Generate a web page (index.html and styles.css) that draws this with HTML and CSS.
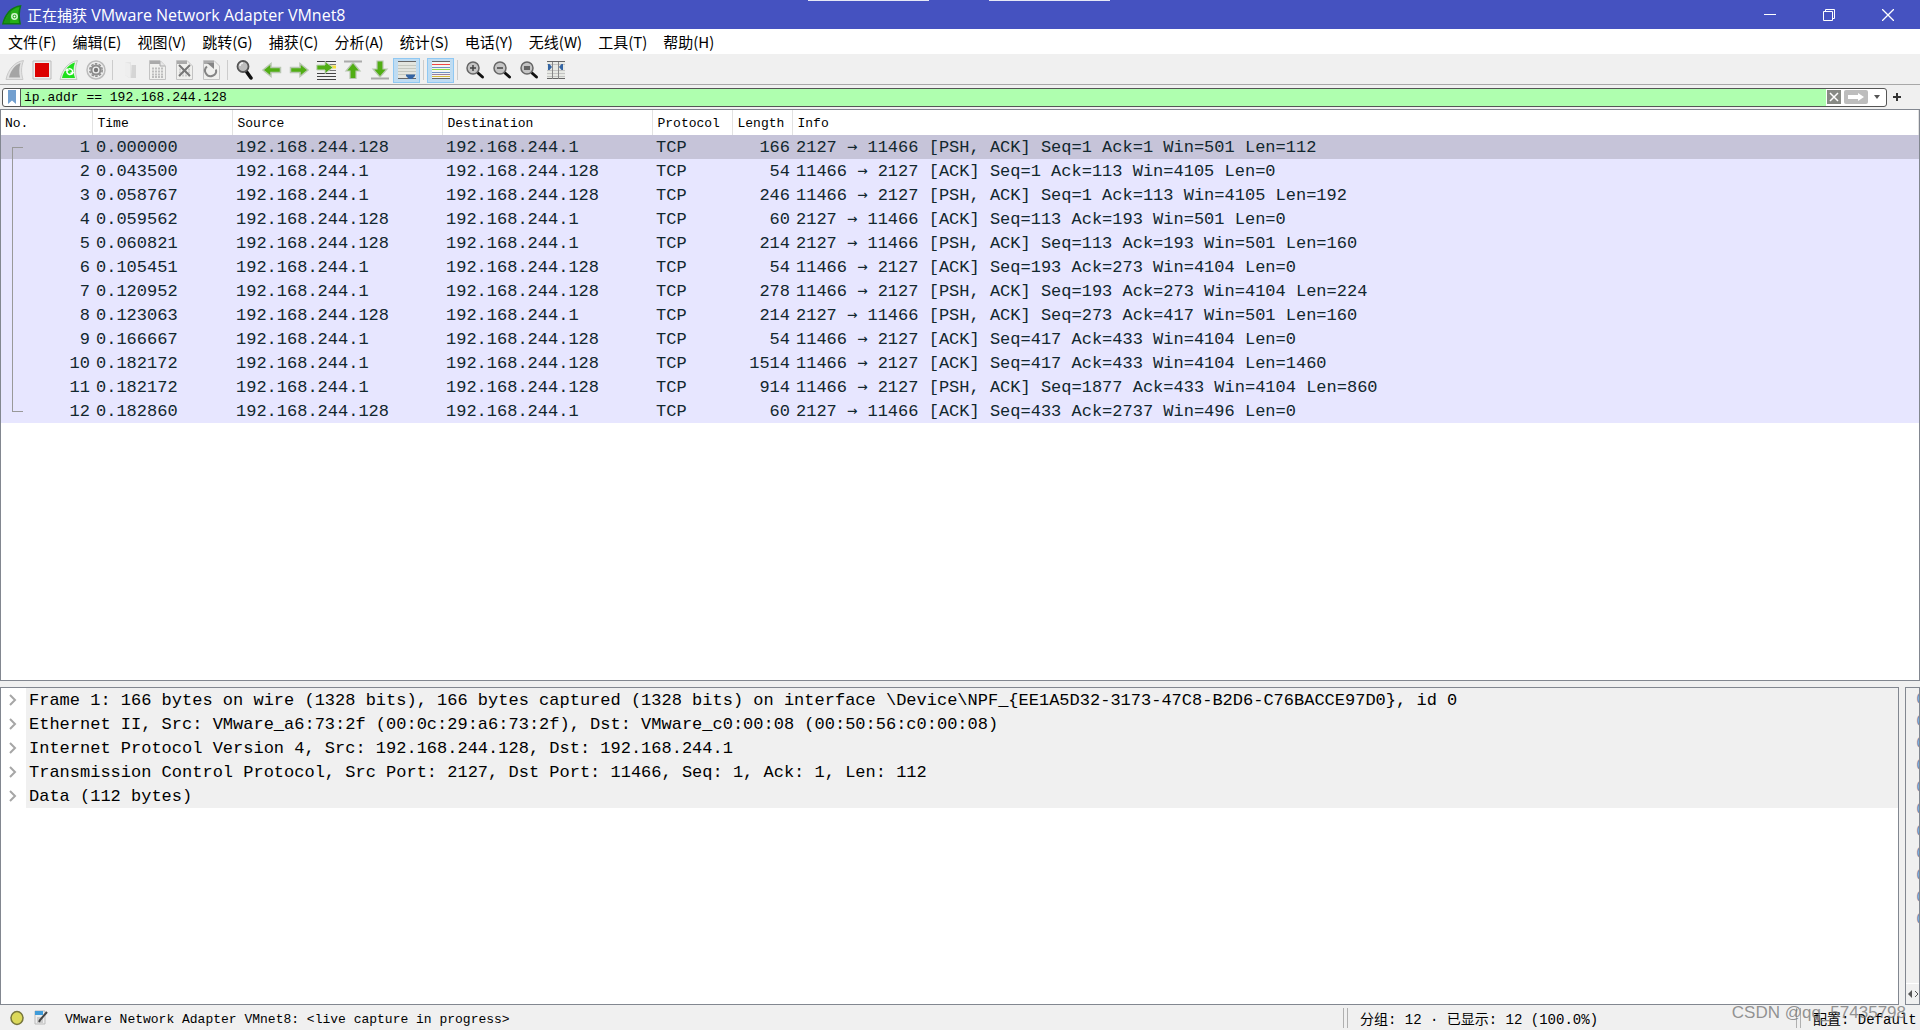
FILE: index.html
```html
<!DOCTYPE html>
<html lang="zh-CN">
<head>
<meta charset="utf-8">
<title>正在捕获 VMware Network Adapter VMnet8</title>
<link rel="stylesheet" href="styles.css">
</head>
<body>
<div class="app">
  <header class="titlebar">
    <svg class="logo" width="20" height="20" viewBox="0 0 20 20"><path d="M0 19.500C2 10 8 1 19.500 0C17.500 6 17.500 13 19 19.500Z" fill="#0f7a10"/><path d="M2 18C5 9 10 3 17.500 2C16 7 16 12 17 18Z" fill="#27b018"/><path d="M2 18C4 13 6 9 9 6L8 18Z" fill="#1a9414"/><circle cx="12.500" cy="11.500" r="2.700" fill="none" stroke="#d5f5d0" stroke-width="1.500"/><circle cx="12.500" cy="11.500" r="1" fill="#fff"/></svg>
    <h1 class="title"><span class="state">正在捕获</span> VMware Network Adapter VMnet8</h1>
    <div class="edge-marks"><span></span><span></span></div>
    <div class="window-buttons">
      <button aria-label="最小化"><svg width="12" height="12"><path d="M0 5.500H12" stroke="#fff"/></svg></button>
      <button aria-label="还原"><svg width="12" height="12" fill="none" stroke="#fff"><path d="M.5 2.500H9.500V11.500H.5ZM2.500 2V.5H11.500V9.500H10"/></svg></button>
      <button aria-label="关闭"><svg width="12" height="12" fill="none" stroke="#fff" stroke-width="1.300"><path d="M0 0L12 12M12 0L0 12"/></svg></button>
    </div>
  </header>

  <nav class="menubar">
    <button>文件(F)</button><button>编辑(E)</button><button>视图(V)</button><button>跳转(G)</button><button>捕获(C)</button><button>分析(A)</button><button>统计(S)</button><button>电话(Y)</button><button>无线(W)</button><button>工具(T)</button><button>帮助(H)</button>
  </nav>

  <div class="toolbar">
    <button aria-label="开始捕获"><svg viewBox="0 0 20 20"><path d="M1 19.500C3 10 9 2 18.500.5C16 7 16 13 18 19.500Z" fill="#e2e2e2" stroke="#c9c9c9"/><path d="M4 17.500C6 10 10 5 15.500 3C14 8 14 13 15 17.500Z" fill="#a5a5a5"/></svg></button>
    <button aria-label="停止捕获"><svg viewBox="0 0 20 20"><path d="M1 1H19V19H1Z" fill="#eee" stroke="#bcbcbc"/><path d="M3 3H17V17H3Z" fill="#dc0000"/></svg></button>
    <button aria-label="重新开始捕获"><svg viewBox="0 0 20 20"><path d="M1 19.500C3 10 9 2 18.500.5C16 7 16 13 18 19.500Z" fill="#e6f3e3" stroke="#c2c8c0"/><path d="M3 18C5 10 10 4 16 2.500C14 8 14 13 16 18Z" fill="#1ee01b"/><path d="M8 10V12.500a3 3 0 0 0 5 1M13.500 13V11a3 3 0 0 0-4-2" fill="none" stroke="#fff" stroke-width="1.500"/><path d="M6 11l2-3 2.500 2.500zM15.500 12l-2.500 3-2-2.500z" fill="#fff"/></svg></button>
    <button aria-label="捕获选项"><svg viewBox="0 0 20 20"><circle cx="10" cy="10" r="9" fill="#eee" stroke="#bbb" stroke-width="1.500"/><circle cx="10" cy="10" r="6.200" fill="none" stroke="#8c8c8c" stroke-width="1.500" stroke-dasharray="2.500 1.400"/><circle cx="10" cy="10" r="4.500" fill="none" stroke="#8c8c8c" stroke-width="2"/><circle cx="10" cy="10" r="2.200" fill="#777"/></svg></button>
    <i class="sep"></i>
    <button aria-label="打开"><svg viewBox="0 0 20 20"><path d="M5 2H11V5H16V18H9L5 15Z" fill="#e5e5e5"/><path d="M12 5H16V18H11Z" fill="#d5d5d5"/><path d="M5 2L10 4V18L5 15Z" fill="#eee"/></svg></button>
    <button aria-label="保存"><svg viewBox="0 0 20 20"><path d="M2.500.5H13L18.500 6V19.500H2.500Z" fill="#f0f0ee" stroke="#c3c3c3"/><path d="M3 1H13V4H3Z" fill="#aaa"/><path d="M13 1V6H18" fill="#e8e8e8" stroke="#aaa"/><path d="M5 8.500H16M5 11.500H16M5 14.500H16M5 17H16" stroke="#bdbdbd" stroke-width="2" stroke-dasharray="2 1"/></svg></button>
    <button aria-label="关闭文件"><svg viewBox="0 0 20 20"><path d="M2.500.5H13L18.500 6V19.500H2.500Z" fill="#f0f0ee" stroke="#c3c3c3"/><path d="M3 1H13V4H3Z" fill="#aaa"/><path d="M5 9.500H16M5 12.500H16M5 15.500H16" stroke="#ccc" stroke-width="2" stroke-dasharray="2 1"/><path d="M5 5L16 16M16 5L5 16" stroke="#777" stroke-width="2"/></svg></button>
    <button aria-label="重新加载"><svg viewBox="0 0 20 20"><path d="M2.500.5H13L18.500 6V19.500H2.500Z" fill="#f0f0ee" stroke="#c3c3c3"/><path d="M3 1H13V4H3Z" fill="#aaa"/><path d="M6 6.500a5.500 5.500 0 1 0 9 3" fill="none" stroke="#858585" stroke-width="2"/><path d="M6 3H13V9Z" fill="#858585"/></svg></button>
    <i class="sep"></i>
    <button aria-label="查找"><svg viewBox="0 0 20 20"><path d="M11 11L16 18" stroke="#111" stroke-width="3.500" stroke-linecap="round"/><circle cx="8" cy="6.500" r="5.500" fill="#bdbdbd" stroke="#555" stroke-width="1.800"/><path d="M5 6a3 3 0 0 1 3-3" stroke="#eee" stroke-width="1.500" fill="none"/></svg></button>
    <button aria-label="后退"><svg viewBox="0 0 20 20"><path d="M1 10L9 3.500V7.500H18.500V12.500H9V16.500Z" fill="#51ae14" stroke="#b9c7b2" stroke-width="1.500"/></svg></button>
    <button aria-label="前进"><svg viewBox="0 0 20 20"><path d="M19 10L11 3.500V7.500H1.500V12.500H11V16.500Z" fill="#51ae14" stroke="#b9c7b2" stroke-width="1.500"/></svg></button>
    <button aria-label="转到分组"><svg viewBox="0 0 20 20"><path d="M1 1.500H20M1 16.500H20M1 19.500H20M1 13.500H20" stroke="#444" stroke-width="1.200"/><path d="M13 4.500H20M13 10.500H20" stroke="#777"/><path d="M14 7H20" stroke="#f5df39" stroke-width="3"/><path d="M17 7.500L9 1.500V5H.8V10H9V13.500Z" fill="#51ae14" stroke="#c4d0be"/></svg></button>
    <button aria-label="首个分组"><svg viewBox="0 0 20 20"><path d="M1 1.500H19" stroke="#aaa" stroke-width="2"/><path d="M10 2.500L17 11H13V18.500H7V11H3Z" fill="#51ae14" stroke="#b9c7b2" stroke-width="1.200"/></svg></button>
    <button aria-label="最新分组"><svg viewBox="0 0 20 20"><path d="M1 18.500H19" stroke="#aaa" stroke-width="2"/><path d="M10 17L17 9H13V1H7V9H3Z" fill="#51ae14" stroke="#b9c7b2" stroke-width="1.200"/></svg></button>
    <button class="on" aria-label="自动滚动"><svg viewBox="0 0 20 20"><path d="M1 2H19V18H1Z" fill="#e3e5df"/><path d="M1 1.500H19M1 18.500H19" stroke="#666"/><path d="M1 5.500H19M1 8.500H19M1 11.500H19M1 14.500H19" stroke="#c4c8c0"/><path d="M9 14.500H18V16L15 19H12L9 16Z" fill="#3465a4"/></svg></button>
    <i class="sep"></i>
    <button class="on" aria-label="着色"><svg viewBox="0 0 20 20"><path d="M1 1H19V19H1Z" fill="#f4f5f2"/><path d="M1 1.500H19M1 18.500H19" stroke="#666"/><path d="M1 4.500H19" stroke="#f04545"/><path d="M1 7.500H19" stroke="#6f93c4"/><path d="M1 9.500H19" stroke="#92dc4a"/><path d="M1 12.500H19" stroke="#6f93c4"/><path d="M1 14.500H19" stroke="#9a7fa0"/><path d="M1 16.500H19" stroke="#d5b93a"/></svg></button>
    <i class="sep"></i>
    <button aria-label="放大"><svg viewBox="0 0 20 20"><path d="M13 13L17.500 17" stroke="#111" stroke-width="3" stroke-linecap="round"/><circle cx="8" cy="8" r="6" fill="#c5c5c5" stroke="#666" stroke-width="1.500"/><path d="M5 8H11M8 5V11" stroke="#444" stroke-width="1.500"/></svg></button>
    <button aria-label="缩小"><svg viewBox="0 0 20 20"><path d="M13 13L17.500 17" stroke="#111" stroke-width="3" stroke-linecap="round"/><circle cx="8" cy="8" r="6" fill="#c5c5c5" stroke="#666" stroke-width="1.500"/><path d="M5 8H11" stroke="#444" stroke-width="1.500"/></svg></button>
    <button aria-label="正常大小"><svg viewBox="0 0 20 20"><path d="M13 13L17.500 17" stroke="#111" stroke-width="3" stroke-linecap="round"/><circle cx="8" cy="8" r="6" fill="#c5c5c5" stroke="#666" stroke-width="1.500"/><path d="M5 7H11M5 9H11" stroke="#444" stroke-width="1.300"/></svg></button>
    <button aria-label="调整列宽"><svg viewBox="0 0 20 20"><path d="M1 1H19V19H1Z" fill="#e7e9e4"/><path d="M1 1.500H19M1 18.500H19" stroke="#666"/><path d="M1 4.500H19M1 10.500H19M1 13.500H19M1 16.500H19" stroke="#c4c4c4"/><path d="M6.500 2V19M12.500 2V19" stroke="#888"/><path d="M2 4H3.500L6 7L3.500 10H2ZM17 4H15.500L13 7L15.500 10H17Z" fill="#3465a4"/></svg></button>
  </div>

  <form class="filterbar">
    <div class="filter">
      <button type="button" class="bookmark" aria-label="书签"><svg width="10" height="14"><path d="M1 0H9V14L5 10.500L1 14Z" fill="#729fcf"/></svg></button>
      <input type="text" aria-label="显示过滤器" value="ip.addr == 192.168.244.128">
      <button type="button" class="clear" aria-label="清除"><svg width="14" height="14"><path d="M0 0H14V14H0Z" fill="#888a85"/><path d="M3 3L11 11M11 3L3 11" stroke="#fff" stroke-width="1.500"/></svg></button>
      <button type="button" class="apply" aria-label="应用"><svg width="24" height="14"><rect width="24" height="14" rx="2" fill="#bdbdbd"/><path d="M4 5H14V3L20 7L14 11V9H4Z" fill="#fff"/></svg></button>
      <button type="button" class="drop" aria-label="历史"><svg width="8" height="4"><path d="M1 0H7L4 4Z" fill="#555"/></svg></button>
    </div>
    <button type="button" class="add" aria-label="添加"><svg width="8" height="8"><path d="M0 4H8M4 0V8" stroke="#333" stroke-width="2"/></svg></button>
  </form>

  <main class="panes">
    <section class="packets">
      <table>
        <colgroup><col class="c-no"><col class="c-time"><col class="c-addr"><col class="c-addr"><col class="c-proto"><col class="c-len"><col></colgroup>
        <thead><tr><th>No.</th><th>Time</th><th>Source</th><th>Destination</th><th>Protocol</th><th>Length</th><th>Info</th></tr></thead>
        <tbody>
          <tr class="selected"><td>1</td><td>0.000000</td><td>192.168.244.128</td><td>192.168.244.1</td><td>TCP</td><td>166</td><td>2127 <span class="to">→</span> 11466 [PSH, ACK] Seq=1 Ack=1 Win=501 Len=112</td></tr>
          <tr><td>2</td><td>0.043500</td><td>192.168.244.1</td><td>192.168.244.128</td><td>TCP</td><td>54</td><td>11466 <span class="to">→</span> 2127 [ACK] Seq=1 Ack=113 Win=4105 Len=0</td></tr>
          <tr><td>3</td><td>0.058767</td><td>192.168.244.1</td><td>192.168.244.128</td><td>TCP</td><td>246</td><td>11466 <span class="to">→</span> 2127 [PSH, ACK] Seq=1 Ack=113 Win=4105 Len=192</td></tr>
          <tr><td>4</td><td>0.059562</td><td>192.168.244.128</td><td>192.168.244.1</td><td>TCP</td><td>60</td><td>2127 <span class="to">→</span> 11466 [ACK] Seq=113 Ack=193 Win=501 Len=0</td></tr>
          <tr><td>5</td><td>0.060821</td><td>192.168.244.128</td><td>192.168.244.1</td><td>TCP</td><td>214</td><td>2127 <span class="to">→</span> 11466 [PSH, ACK] Seq=113 Ack=193 Win=501 Len=160</td></tr>
          <tr><td>6</td><td>0.105451</td><td>192.168.244.1</td><td>192.168.244.128</td><td>TCP</td><td>54</td><td>11466 <span class="to">→</span> 2127 [ACK] Seq=193 Ack=273 Win=4104 Len=0</td></tr>
          <tr><td>7</td><td>0.120952</td><td>192.168.244.1</td><td>192.168.244.128</td><td>TCP</td><td>278</td><td>11466 <span class="to">→</span> 2127 [PSH, ACK] Seq=193 Ack=273 Win=4104 Len=224</td></tr>
          <tr><td>8</td><td>0.123063</td><td>192.168.244.128</td><td>192.168.244.1</td><td>TCP</td><td>214</td><td>2127 <span class="to">→</span> 11466 [PSH, ACK] Seq=273 Ack=417 Win=501 Len=160</td></tr>
          <tr><td>9</td><td>0.166667</td><td>192.168.244.1</td><td>192.168.244.128</td><td>TCP</td><td>54</td><td>11466 <span class="to">→</span> 2127 [ACK] Seq=417 Ack=433 Win=4104 Len=0</td></tr>
          <tr><td>10</td><td>0.182172</td><td>192.168.244.1</td><td>192.168.244.128</td><td>TCP</td><td>1514</td><td>11466 <span class="to">→</span> 2127 [ACK] Seq=417 Ack=433 Win=4104 Len=1460</td></tr>
          <tr><td>11</td><td>0.182172</td><td>192.168.244.1</td><td>192.168.244.128</td><td>TCP</td><td>914</td><td>11466 <span class="to">→</span> 2127 [PSH, ACK] Seq=1877 Ack=433 Win=4104 Len=860</td></tr>
          <tr><td>12</td><td>0.182860</td><td>192.168.244.128</td><td>192.168.244.1</td><td>TCP</td><td>60</td><td>2127 <span class="to">→</span> 11466 [ACK] Seq=433 Ack=2737 Win=496 Len=0</td></tr>
        </tbody>
      </table>
      <div class="conversation"></div>
    </section>
    <div class="lower">
      <section class="details">
        <ul>
          <li><button aria-label="展开"><svg width="8" height="12"><path d="M1 1L6 6L1 11" fill="none" stroke="#a6a6a6" stroke-width="2"/></svg></button><span>Frame 1: 166 bytes on wire (1328 bits), 166 bytes captured (1328 bits) on interface \Device\NPF_{EE1A5D32-3173-47C8-B2D6-C76BACCE97D0}, id 0</span></li>
          <li><button aria-label="展开"><svg width="8" height="12"><path d="M1 1L6 6L1 11" fill="none" stroke="#a6a6a6" stroke-width="2"/></svg></button><span>Ethernet II, Src: VMware_a6:73:2f (00:0c:29:a6:73:2f), Dst: VMware_c0:00:08 (00:50:56:c0:00:08)</span></li>
          <li><button aria-label="展开"><svg width="8" height="12"><path d="M1 1L6 6L1 11" fill="none" stroke="#a6a6a6" stroke-width="2"/></svg></button><span>Internet Protocol Version 4, Src: 192.168.244.128, Dst: 192.168.244.1</span></li>
          <li><button aria-label="展开"><svg width="8" height="12"><path d="M1 1L6 6L1 11" fill="none" stroke="#a6a6a6" stroke-width="2"/></svg></button><span>Transmission Control Protocol, Src Port: 2127, Dst Port: 11466, Seq: 1, Ack: 1, Len: 112</span></li>
          <li><button aria-label="展开"><svg width="8" height="12"><path d="M1 1L6 6L1 11" fill="none" stroke="#a6a6a6" stroke-width="2"/></svg></button><span>Data (112 bytes)</span></li>
        </ul>
      </section>
      <section class="bytes">
        <div class="offsets"><span>0</span><span>0</span><span>0</span><span>0</span><span>0</span><span>0</span><span>0</span><span>0</span><span>0</span><span>0</span><span>0</span></div>
        <div class="scroll"><svg width="12" height="8"><path d="M5 0V8L1 4Z" fill="#555"/><path d="M8 1L11 4L8 7" fill="none" stroke="#555"/></svg></div>
      </section>
    </div>
  </main>

  <footer class="statusbar">
    <button aria-label="专家信息"><svg width="14" height="16"><ellipse cx="7" cy="8" rx="6" ry="6.500" fill="#dcd95a" stroke="#77763c" stroke-width="1.500"/></svg></button>
    <button aria-label="注释"><svg width="14" height="16"><path d="M1 1H11V14H1Z" fill="#eee" stroke="#bbb"/><path d="M1 1H9V5H1Z" fill="#3f9bd8"/><path d="M3 8H9M3 10H9M3 12H9" stroke="#aaa"/><path d="M13 2L6 10L5 12" stroke="#444" stroke-width="2" fill="none"/></svg></button>
    <span class="source">VMware Network Adapter VMnet8: &lt;live capture in progress&gt;</span>
    <i class="grip"></i>
    <span class="counts">分组: 12 · 已显示: 12 (100.0%)</span>
    <i class="grip"></i>
    <span class="profile">配置: Default</span>
    <span class="watermark">CSDN @qq_57435798</span>
  </footer>
</div>
</body>
</html>
```

FILE: styles.css
```css
* { box-sizing: border-box; }
body {
  margin: 0;
  background: #f0f0f0;
  color: #000;
  font-family: "Liberation Mono", "Noto Sans CJK SC", monospace;
  font-size: 13px;
}
button { margin: 0; padding: 0; border: 0; background: none; font: inherit; color: inherit; }
svg { display: block; }
.app { display: flex; flex-direction: column; height: 100vh; }

.titlebar {
  position: relative;
  display: flex;
  align-items: center;
  flex: none;
  height: 29px;
  padding: 0 3px 0 2px;
  background: #4552c0;
  color: #fff;
}
.logo { flex: none; margin-right: 5px; }
.title {
  flex: 1;
  margin: 0;
  font: 400 16px/24px "Open Sans", "Noto Sans CJK SC", sans-serif;
}
.state { font-size: 15px; }
.edge-marks { position: absolute; top: 0; left: 42.1%; display: flex; gap: 60px; }
.edge-marks span { width: 121px; height: 1px; background: #e6e8f6; }
.window-buttons { display: flex; }
.window-buttons button { display: grid; place-items: center; width: 59px; height: 29px; }

.menubar {
  display: flex;
  gap: 16px;
  flex: none;
  height: 27px;
  padding: 0 8px;
  background: #fff;
  border-bottom: 2px solid #f0f0f0;
  font: 15px/25px "Noto Sans CJK SC", sans-serif;
}

.toolbar {
  display: flex;
  align-items: center;
  flex: none;
  height: 29px;
  padding-left: 1px;
  border-bottom: 1px solid #a8a8a8;
}
.toolbar button { display: grid; place-items: center; width: 27px; height: 25px; border: 1px solid transparent; }
.toolbar svg { width: 20px; height: 20px; }
.toolbar .on { background: #bfdcf2; border-color: #8fc8f3; }
.sep { width: 1px; height: 20px; margin: 0 3px; background: #ccc; }

.filterbar { display: flex; align-items: center; flex: none; height: 24px; margin: 0; padding: 0 19px 0 2px; }
.filter {
  display: flex;
  align-items: center;
  flex: 1;
  height: 19px;
  border: 1px solid #555;
  border-radius: 3px;
  background: #fff;
}
.filter .bookmark { display: grid; place-items: center; width: 18px; height: 17px; border-right: 1px solid #555; }
.filter input {
  flex: 1;
  min-width: 0;
  height: 17px;
  margin: 0;
  padding: 0 3px;
  border: 0;
  outline: 0;
  background: #afffaf;
  font: inherit;
}
.filter .clear { margin: 0 3px 0 1px; }
.filter .drop { display: grid; place-items: center; width: 18px; height: 17px; }
.filterbar .add { margin-left: 6px; }

.panes { display: flex; flex-direction: column; flex: 1; min-height: 0; gap: 6px; }
.packets {
  position: relative;
  flex: 571;
  min-height: 0;
  overflow: hidden;
  border: 1px solid #828790;
  background: #fff;
}
table { width: 100%; table-layout: fixed; border-collapse: collapse; }
.c-no { width: 91px; }
.c-time { width: 140px; }
.c-addr { width: 210px; }
.c-proto { width: 80px; }
.c-len { width: 60px; }
th {
  height: 25px;
  padding: 2px 5px 0;
  border-right: 1px solid #e2e2e2;
  text-align: left;
  font-weight: 400;
  white-space: nowrap;
}
th:first-child { padding-left: 4px; }
td {
  height: 24px;
  padding: 2px 2px 0 4px;
  background: #e7e6ff;
  color: #12272e;
  font-size: 17px;
  line-height: 22px;
  white-space: nowrap;
}
td:nth-child(1), td:nth-child(6) { text-align: right; }
.to { font-family: "DejaVu Sans Mono", monospace; line-height: 1; }
.selected td { background: #c6c4d9; }
.conversation {
  position: absolute;
  top: 37px;
  left: 11px;
  width: 11px;
  height: 265px;
  border: 1px solid #999;
  border-right: 0;
}

.lower { display: flex; flex: 318; min-height: 0; gap: 6px; }
.details { flex: 1; min-width: 0; overflow: hidden; border: 1px solid #828790; background: #fff; }
.details ul { margin: 0; padding: 0; list-style: none; }
.details li { display: flex; height: 24px; font-size: 17px; line-height: 22px; white-space: nowrap; }
.details li button { display: grid; place-items: center; width: 25px; height: 24px; padding-right: 1px; }
.details li span { flex: 1; padding: 2px 0 0 3px; background: #f0f0f0; }
.bytes {
  display: flex;
  flex-direction: column;
  justify-content: space-between;
  width: 15px;
  overflow: hidden;
  border: 1px solid #828790;
}
.offsets { display: flex; flex-direction: column; padding: 1px 0 0 10px; font-size: 17px; line-height: 22px; color: #6c8fb5; }
.scroll { height: 21px; padding: 6px 0 0 1px; border-top: 1px solid #fff; }

.statusbar {
  position: relative;
  display: flex;
  align-items: center;
  flex: none;
  height: 25px;
  padding: 0 4px 0 10px;
  white-space: nowrap;
}
.statusbar button { margin-right: 10px; }
.source { flex: 1; padding: 3px 0 0 7px; }
.grip { width: 5px; height: 20px; margin-right: 12px; border: 1px solid #b0b0b0; border-width: 0 1px; }
.counts { width: 436px; font-size: 14px; }
.profile { width: 103px; font-size: 14px; text-align: right; }
.watermark {
  position: absolute;
  right: 14px;
  top: -2px;
  color: rgba(120, 120, 120, .8);
  font: 17px/20px "Liberation Sans", sans-serif;
}
```
